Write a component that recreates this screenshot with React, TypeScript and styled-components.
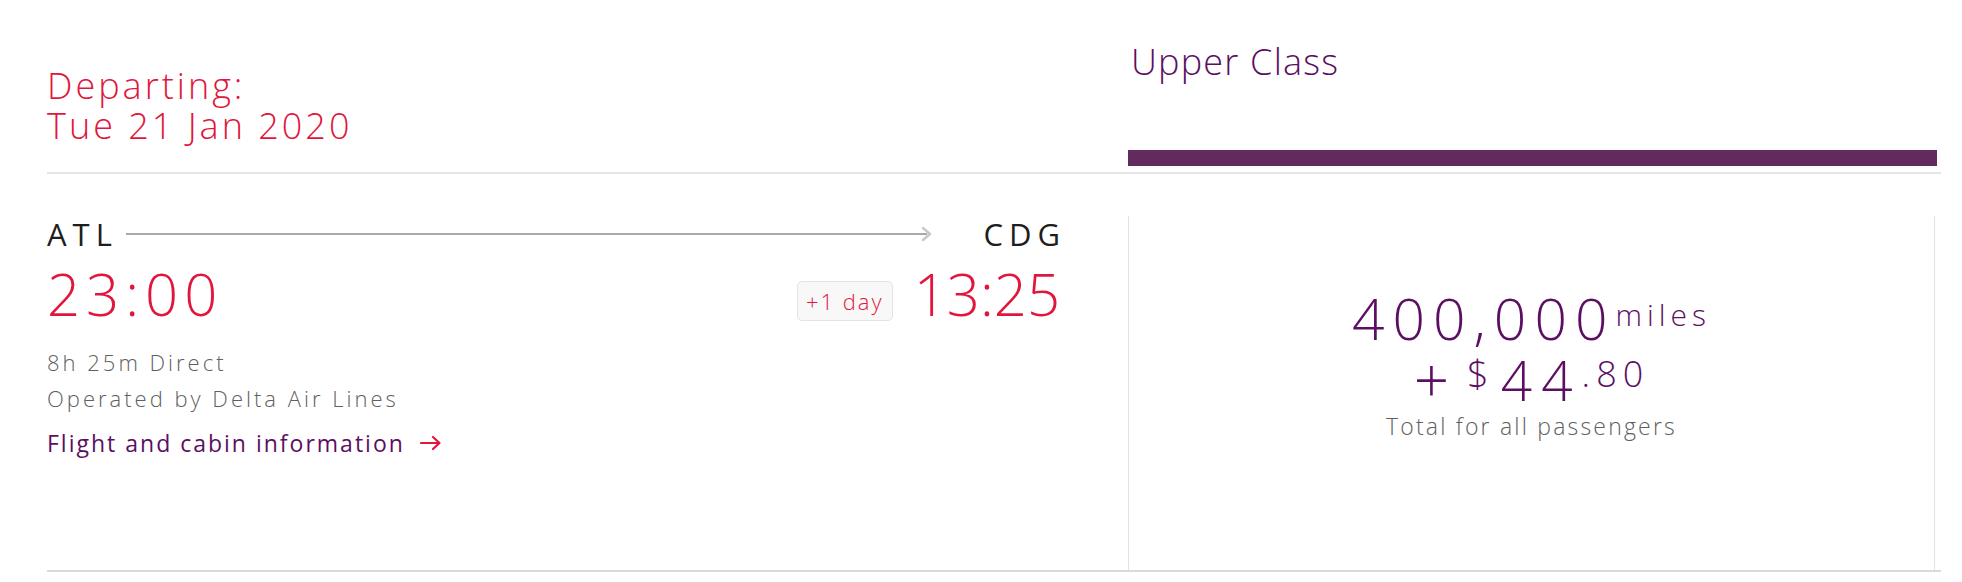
import React from 'react';
import styled, { createGlobalStyle } from 'styled-components';

const GlobalStyle = createGlobalStyle`
  body {
    margin: 0;
    background: #fff;
    font-family: 'Open Sans', 'Liberation Sans', sans-serif;
    font-weight: 300;
  }
`;

const RED = '#e1163c';
const PURPLE = '#5c0f62';

const ChevronIcon = () => (
  <svg width='12' height='16' viewBox='0 0 12 16'>
    <polyline points='2,2 9,8 2,14' fill='none' stroke='#c9c9c9' strokeWidth='2.5' strokeLinecap='round' strokeLinejoin='round' />
  </svg>
);

const ArrowIcon = () => (
  <svg width='22' height='16' viewBox='0 0 22 16'>
    <line x1='1' y1='8' x2='19' y2='8' stroke={RED} strokeWidth='2.2' strokeLinecap='round' />
    <polyline points='13,2 19.5,8 13,14' fill='none' stroke={RED} strokeWidth='2.2' strokeLinecap='round' strokeLinejoin='round' />
  </svg>
);

const App = () => {
  return (
    <>
      <GlobalStyle />
      <Page>
        <Header>
          <DepartBlock>
            <DepartLine>Departing:</DepartLine>
            <DepartLine>Tue 21 Jan 2020</DepartLine>
          </DepartBlock>
          <CabinHead>
            <CabinTitle>Upper Class</CabinTitle>
            <CabinBar />
          </CabinHead>
        </Header>

        <Body>
          <FlightInfo>
            <RouteRow>
              <Airport>ATL</Airport>
              <RouteLine />
              <ChevronIcon />
              <Airport $right>CDG</Airport>
            </RouteRow>
            <TimesRow>
              <Time $spacing={6}>23:00</Time>
              <ArrivalGroup>
                <DayBadge>+1 day</DayBadge>
                <Time $spacing={0}>13:25</Time>
              </ArrivalGroup>
            </TimesRow>
            <Details>
              <div>8h 25m Direct</div>
              <div>Operated by Delta Air Lines</div>
            </Details>
            <InfoLink>
              Flight and cabin information
              <ArrowIcon />
            </InfoLink>
          </FlightInfo>

          <PricePanel>
            <Miles>
              400,000<Sup $size={30} $raise={14} $spacing={5}>miles</Sup>
            </Miles>
            <Cash>
              <Plus>+</Plus>
              <Sup $size={38} $raise={13} $spacing={0} $left={18} $right={12}>$</Sup>
              <Whole>44</Whole>
              <Sup $size={36} $raise={14} $spacing={6}>.80</Sup>
            </Cash>
            <PriceNote>Total for all passengers</PriceNote>
          </PricePanel>
        </Body>
      </Page>
    </>
  );
};

export default App;

const Page = styled.div`
  padding: 0 21px 0 47px;
`;

const Header = styled.div`
  display: grid;
  grid-template-columns: 1081px 1fr;
  height: 172px;
  border-bottom: 2px solid #e6e6e6;
`;

const DepartBlock = styled.div`
  align-self: end;
  padding-bottom: 26px;
`;

const DepartLine = styled.div`
  font-size: 36px;
  line-height: 40px;
  letter-spacing: 3px;
  color: ${RED};
`;

const CabinHead = styled.div`
  display: flex;
  flex-direction: column;
  padding-top: 42px;
`;

const CabinTitle = styled.div`
  font-size: 36px;
  line-height: 40px;
  letter-spacing: 1.2px;
  color: ${PURPLE};
  padding-left: 3px;
`;

const CabinBar = styled.div`
  margin-top: auto;
  margin-right: 4px;
  margin-bottom: 6px;
  height: 16px;
  background: #622a5f;
`;

const Body = styled.div`
  display: grid;
  grid-template-columns: 1081px 1fr;
  height: 396px;
  border-bottom: 2px solid #d9d9d9;
`;

const FlightInfo = styled.div`
  padding: 42px 68px 0 0;
`;

const RouteRow = styled.div`
  display: flex;
  align-items: center;
  height: 36px;
`;

const Airport = styled.div<{ $right?: boolean }>`
  font-size: 31px;
  line-height: 36px;
  letter-spacing: 6px;
  color: #1e1e1e;
  font-weight: 400;
  margin-left: ${({ $right }) => ($right ? '50px' : '0')};
  margin-right: ${({ $right }) => ($right ? '-6px' : '0')};
`;

const RouteLine = styled.div`
  flex: 1;
  height: 2px;
  margin-left: 8px;
  margin-right: -6px;
  background: #a9a9a9;
`;

const TimesRow = styled.div`
  display: flex;
  justify-content: space-between;
  margin-top: 10px;
`;

const Time = styled.div<{ $spacing: number }>`
  font-size: 58px;
  line-height: 64px;
  letter-spacing: ${({ $spacing }) => $spacing}px;
  color: ${RED};
`;

const ArrivalGroup = styled.div`
  display: flex;
  align-items: flex-end;
  gap: 21px;
`;

const DayBadge = styled.div`
  width: 96px;
  height: 40px;
  box-sizing: border-box;
  margin-bottom: 5px;
  display: flex;
  align-items: center;
  justify-content: center;
  border: 1.5px solid #e3e3e3;
  border-radius: 5px;
  background: #f8f8f8;
  font-size: 22px;
  letter-spacing: 2px;
  color: ${RED};
`;

const Details = styled.div`
  margin-top: 18px;
  font-size: 22px;
  line-height: 36px;
  letter-spacing: 3px;
  color: #606060;
`;

const InfoLink = styled.a`
  display: flex;
  align-items: center;
  gap: 15px;
  margin-top: 11px;
  font-size: 23px;
  line-height: 32px;
  letter-spacing: 2px;
  color: ${PURPLE};
  font-weight: 400;
  cursor: pointer;
`;

const PricePanel = styled.div`
  margin-top: 42px;
  margin-right: 6px;
  border-left: 1px solid #e2e2e2;
  border-right: 1px solid #e2e2e2;
  padding-top: 70px;
  text-align: center;
  color: ${PURPLE};
`;

const Miles = styled.div`
  font-size: 57px;
  line-height: 64px;
  letter-spacing: 8px;
`;

const Cash = styled.div`
  font-size: 55px;
  line-height: 60px;
`;

const Plus = styled.span`
  font-size: 62px;
  line-height: 0;
  vertical-align: -2px;
`;

const Whole = styled.span`
  letter-spacing: 9px;
`;

const Sup = styled.span<{ $size: number; $raise: number; $spacing: number; $left?: number; $right?: number }>`
  font-size: ${({ $size }) => $size}px;
  vertical-align: ${({ $raise }) => $raise}px;
  letter-spacing: ${({ $spacing }) => $spacing}px;
  line-height: 0;
  margin-left: ${({ $left }) => $left ?? 0}px;
  margin-right: ${({ $right }) => $right ?? 0}px;
`;

const PriceNote = styled.div`
  font-size: 23px;
  line-height: 32px;
  letter-spacing: 2.2px;
  color: #606060;
`;
